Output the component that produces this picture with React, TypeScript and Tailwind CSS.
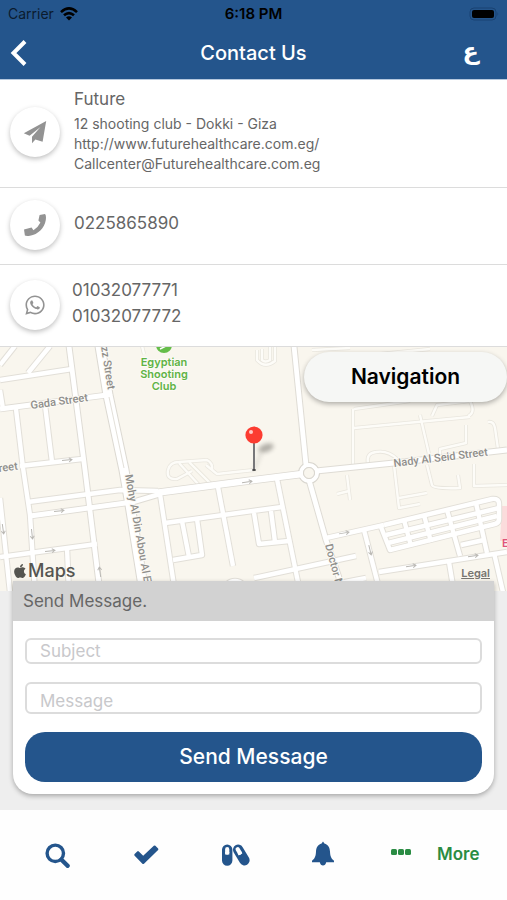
import type { ReactNode } from "react";
import { FaApple, FaWhatsapp } from "react-icons/fa";

const roads = {
  small: [
    "M0 365L15 346", "M28 373L50 346", "M0 380L72 369", "M0 390L3 409", "M16 409L23 468L30 515L35 592",
    "M45 405L52 462", "M20 466L82 459", "M28 502L120 490L158 491",
    "M0 557L97 544", "M0 498L10 592", "M67 548L69 592",
    "M160 494L175 592", "M165 523L282 507", "M182 521L189 557", "M197 519L202 555L173 560",
    "M218 487L233 566", "M224 592A11 11 0 1 1 246 592", "M277 479L300 592",
    "M254 513L259 544L289 541", "M271 511L275 542", "M326 538L384 525",
    "M364 530L380 592", "M379 572L507 552", "M449 562L454 592", "M494 553L503 592",
    "M254 578L356 556", "M340 583L366 578", "M461 545L484 540",
    "M384 525L492 499Q499 498 499 504V519Q499 523 495 524L390 550L381 527",
    "M386 535L499 508", "M388 543L497 516", "M404 520L411 546", "M424 515L431 542",
    "M447 510L460 556", "M476 503L487 553",
  ],
  medium: ["M0 409L107 395", "M69 346L85 470L100 592", "M294 346L306 465", "M309 480L326 540L344 592", "M30 516L133 502L160 494", "M316 471L394 463L507 450"],
  faint: [
    "M353 409V466", "M354 409L410 401", "M354 428L470 417", "M420 415L429 454", "M432 416L437 405L470 401Q476 413 468 416",
    "M440 463V449L466 443V425", "M488 422Q494 421 495 428L498 449", "M368 463Q366 453 376 452Q388 450 397 459",
    "M257 350V360Q265 369 275 361V346", "M262 349V360Q265 363 270 360V347", "M142 346L144 354",
    "M168 470Q170 462 179 462L207 460Q213 463 212 470", "M179 463L199 485", "M189 462L211 484",
    "M168 470Q166 480 177 479L192 471", "M206 465L217 474L254 470", "M347 475L350 500", "M337 494L349 491",
    "M394 465L399 508L420 504", "M399 498L427 493", "M427 465L432 485Q433 489 460 488L458 475", "M474 464V486L507 485",
    "M312 350L350 348", "M370 355L430 349",
  ],
};

const arrows: [number, number, number][] = [
  [67, 460, -5], [59, 511, -7], [50, 551, -7], [32, 534, 84], [100, 572, -98], [247, 482, -8],
  [344, 533, -10], [370, 550, 76], [411, 566, -8], [473, 556, -8], [3, 529, 82],
];

function StreetMap() {
  return (
    <svg
      viewBox="0 347 507 244"
      preserveAspectRatio="xMidYMid slice"
      className="block h-full w-full font-[Inter,sans-serif]"
      role="img"
      aria-label="Map"
    >
      <defs>
        <filter id="soft" x="-50%" y="-50%" width="200%" height="200%">
          <feGaussianBlur stdDeviation="2" />
        </filter>
      </defs>
      <rect y="346" width="507" height="246" fill="#f9f6ee" />
      <path d="M502 506H507V541H500Z" fill="#fbdcdc" />
      <g fill="none" strokeLinejoin="round">
        {roads.faint.map((d) => <path key={d} d={d} stroke="#e9e6de" strokeWidth="4" />)}
        {roads.faint.map((d) => <path key={d + "f"} d={d} stroke="#fdfcf8" strokeWidth="2.4" />)}
        {roads.small.map((d) => <path key={d} d={d} stroke="#e2dfd8" strokeWidth="6.4" />)}
        {roads.medium.map((d) => <path key={d} d={d} stroke="#dfdcd5" strokeWidth="6.8" />)}
        <path d="M100 346L108 395L124 470L130 505L144 592" stroke="#dcd9d2" strokeWidth="11" />
        <path d="M155 493L254 480L302 474" stroke="#dcd9d2" strokeWidth="8" />
        <circle cx="309" cy="473" r="8" stroke="#d9d6cf" strokeWidth="6" />
        {roads.small.map((d) => <path key={d + "w"} d={d} stroke="#fff" strokeWidth="4.4" />)}
        {roads.medium.map((d) => <path key={d + "w"} d={d} stroke="#fff" strokeWidth="4.8" />)}
        <path d="M100 346L108 395L124 470L130 505L144 592" stroke="#fff" strokeWidth="9" />
        <path d="M109 397L124 468" stroke="#e3e0d9" strokeWidth="1" />
        <path d="M155 493L254 480L302 474" stroke="#fff" strokeWidth="6.5" />
        <circle cx="309" cy="473" r="8" stroke="#fff" strokeWidth="4" />
        <circle cx="309" cy="473" r="5.5" fill="#f9f6ee" stroke="#d9d6cf" />
      </g>
      {arrows.map(([x, y, r]) => (
        <path key={`${x}-${y}`} d="M-5 0H5M2 -2L5 0L2 2" transform={`translate(${x} ${y}) rotate(${r})`} fill="none" stroke="#bab8b3" strokeWidth="1" />
      ))}
      <g className="font-[Roboto,sans-serif]" fill="#8f8e8b" stroke="#fcfaf5" strokeWidth="2" paintOrder="stroke" fontSize="11" fontWeight="500">
        <text transform="translate(31 409) rotate(-8)">Gada Street</text>
        <text transform="translate(101 347) rotate(81)">zz Street</text>
        <text transform="translate(125 475) rotate(80)">Mohy Al Din Abou Al E</text>
        <text transform="translate(394 467) rotate(-7)">Nady Al Seid Street</text>
        <text transform="translate(325 545) rotate(75)">Doctor M</text>
        <text transform="translate(-1 472) rotate(-7)">reet</text>
      </g>
      <g fill="#5fb345" stroke="#fcfaf5" strokeWidth="2" paintOrder="stroke" fontSize="11" fontWeight="600" textAnchor="middle">
        <text x="164" y="366">Egyptian</text>
        <text x="164" y="378">Shooting</text>
        <text x="164" y="390">Club</text>
      </g>
      <circle cx="164" cy="345" r="8" fill="#65bd49" />
      <path d="M160 349L168 345" stroke="#fff" strokeWidth="1.5" />
      <text x="502" y="547" fontSize="11" fontWeight="600" fill="#e0547b">E</text>
      <ellipse cx="266" cy="448" rx="8" ry="4" fill="#77756e" opacity=".55" transform="rotate(-20 266 448)" filter="url(#soft)" />
      <path d="M254 470L261 453" stroke="#8a8882" strokeWidth="2" opacity=".35" filter="url(#soft)" />
      <path d="M254 442V470" stroke="#77777a" strokeWidth="2" />
      <ellipse cx="254" cy="470" rx="2" ry="1" fill="#444" />
      <circle cx="254" cy="435" r="8.6" fill="#fc3c31" />
      <circle cx="251" cy="432" r="2" fill="#ffc9c5" />
    </svg>
  );
}

function SearchIcon() {
  return (
    <svg className="size-[25px]" viewBox="0 0 25 25" fill="none" stroke="currentColor">
      <circle cx="10.3" cy="10.3" r="8.2" strokeWidth="3.4" />
      <path d="M16.5 16.8L22.6 22.8" strokeWidth="4.4" strokeLinecap="round" />
    </svg>
  );
}

function CheckIcon() {
  return (
    <svg className="h-5 w-[25px]" viewBox="0 0 25 20" fill="currentColor">
      <path d="M.4 10.4Q0 9.6.6 9L3.2 6.4Q4 5.8 4.8 6.4L9.2 10.8L19.8.8Q20.6.2 21.4.8L24.1 3.5Q24.7 4.3 24.1 5.1L10 18.8Q9.2 19.4 8.4 18.8Z" />
    </svg>
  );
}

function CapsulesIcon() {
  return (
    <svg className="h-[22px] w-7" viewBox="0 0 28 22" fill="none" stroke="currentColor" strokeLinecap="round">
      <path d="M5.2 5.6V16.6M16.2 5.8L22.4 16.2" strokeWidth="10.4" />
      <path d="M5.2 5.2V8.6M15.6 5.2L17.8 8.8" stroke="#fefefe" strokeWidth="4.2" />
      <path d="M3.1 8H7.3V10.6H3.1ZM15.6 9.6L19.2 7.4L20.4 9.3L16.7 11.5Z" fill="#fefefe" stroke="none" />
    </svg>
  );
}

function BellIcon() {
  return (
    <svg className="h-[25px] w-[22px]" viewBox="0 0 22 25" fill="currentColor">
      <path d="M11 .5L12.4 2.4C16.2 3.5 17.8 6.5 18 10.5C18.2 15 19 17.2 22 19.8V21.2H14.2Q13.4 24.5 11 24.5Q8.6 24.5 7.8 21.2H0V19.8C3 17.2 3.8 15 4 10.5C4.2 6.5 5.8 3.5 9.6 2.4Z" />
    </svg>
  );
}

function ContactRow({ icon, children, className }: { icon: ReactNode; children: ReactNode; className: string }) {
  return (
    <section className={`flex items-center border-b border-[#dcdcdc] px-2.5 ${className}`}>
      <div className="flex size-[50px] shrink-0 items-center justify-center rounded-full bg-white text-[#939393] shadow-[0_2px_5px_rgba(0,0,0,0.25)]">
        {icon}
      </div>
      {children}
    </section>
  );
}

export default function App() {
  return (
    <div className="flex min-h-screen flex-col bg-[#eeeeee] font-[Inter,'Liberation_Sans',sans-serif] text-[#666666]">
      <header className="border-b border-[#b5c8de] bg-[#24558c]">
        <div className="grid h-7 grid-cols-3 items-center px-2 text-black">
          <div className="flex items-center gap-1.5 text-sm text-[#0b1b2e]">
            Carrier
            <svg className="h-[14px] w-[18px]" viewBox="0 0 18 14" fill="none" stroke="#000" strokeWidth="2.6">
              <path d="M1 5.1Q9-2.3 17 5.1M4 8.3Q9 3.8 14 8.3" />
              <path d="M9 13.5L6 10.5Q9 8 12 10.5Z" fill="#000" stroke="none" />
            </svg>
          </div>
          <div className="text-center text-[15px] font-semibold">6:18 PM</div>
          <svg className="h-[14px] w-[30px] justify-self-end" viewBox="0 0 30 14">
            <rect x="1" y="1" width="26" height="12" rx="4" fill="none" stroke="#194272" />
            <rect x="3" y="3" width="22" height="8" rx="2" fill="#000" />
            <path d="M28.5 5V9Q30 7 28.5 5Z" fill="#194272" />
          </svg>
        </div>
        <div className="grid h-[51px] grid-cols-3 items-center px-2.5 pb-0.5 text-white">
          <button type="button" aria-label="Back" className="w-8">
            <svg className="h-[26px] w-[17px]" viewBox="0 0 17 26" fill="none" stroke="currentColor" strokeWidth="4">
              <path d="M15 1.5L3.5 13L15 24.5" />
            </svg>
          </button>
          <h1 className="text-center text-xl font-medium whitespace-nowrap">Contact Us</h1>
          <button type="button" lang="ar" className="justify-self-end px-[18px] pb-1 font-['DejaVu_Sans',sans-serif] text-2xl leading-8 font-bold">ع</button>
        </div>
      </header>

      <main className="flex grow flex-col">
        <div className="bg-white">
          <ContactRow
            className="h-[108px] pb-1"
            icon={
              <svg className="size-6" viewBox="0 0 24 24" fill="currentColor">
                <path d="M23.2 1L.8 13.3L6.6 15.8L17.5 7L9 16.8V23.2L12.4 19.6L19.6 21.8Z" />
              </svg>
            }
          >
            <div className="min-w-0 pb-1.5 pl-3.5">
              <h2 className="text-[17px] leading-[30px]">Future</h2>
              <address className="text-sm leading-5 not-italic">
                12 shooting club - Dokki - Giza
                <br />
                <a href="http://www.futurehealthcare.com.eg/">http://www.futurehealthcare.com.eg/</a>
                <br />
                <a href="mailto:Callcenter@Futurehealthcare.com.eg">Callcenter@Futurehealthcare.com.eg</a>
              </address>
            </div>
          </ContactRow>
          <ContactRow
            className="h-[77px] pb-0.5"
            icon={
              <svg className="size-[22px]" viewBox="0 0 22 22" fill="currentColor">
                <path d="M15.6 1L21 0Q22.4 1 21.8 6C20.5 14 14 20.5 6 21.8Q2 22.3 .9 21.5L0 15.6L7.6 13.6L9.4 16.2Q14.2 13.2 16.4 8.4L14.4 6.6Z" />
              </svg>
            }
          >
            <a href="tel:0225865890" className="pb-0.5 pl-3.5 text-[17px]">0225865890</a>
          </ContactRow>
          <ContactRow className="h-[82px] pb-0.5" icon={<FaWhatsapp className="size-[22px]" />}>
            <div className="flex flex-col pb-1 pl-3 text-[17px] leading-[26px]">
              <a href="tel:01032077771">01032077771</a>
              <a href="tel:01032077772">01032077772</a>
            </div>
          </ContactRow>
        </div>

        <section className="relative h-[244px]">
          <StreetMap />
          <button type="button" className="absolute top-[5px] right-0 h-[50px] w-[203px] rounded-[25px] bg-[#f6f7f5] text-[21px] font-semibold text-black shadow-[0_2px_5px_rgba(0,0,0,0.3)]">
            Navigation
          </button>
          <div className="absolute bottom-2 left-3 flex items-center text-lg leading-6 font-medium text-[#555550]">
            <FaApple className="size-4" />
            Maps
          </div>
          <a href="#legal" className="absolute right-[17px] bottom-2.5 text-[11px] leading-4 font-semibold text-[#777570] underline">Legal</a>
        </section>

        <form className="relative mx-[13px] -mt-[10px] overflow-hidden rounded-b-[20px] bg-white shadow-[0_2px_5px_rgba(0,0,0,0.3)]">
          <h2 className="bg-[#d2d2d2] px-2.5 text-[17px] leading-10">Send Message.</h2>
          <div className="flex flex-col px-3 pt-[17px] pb-3">
            <input aria-label="Subject" placeholder="Subject" className="h-[26px] rounded-md border-2 border-[#dcdcdc] px-[13px] text-[17px] outline-none placeholder:text-[#c8c8cb]" />
            <input aria-label="Message" placeholder="Message" className="mt-[18px] h-8 rounded-md border-2 border-[#dcdcdc] px-[13px] pt-1.5 text-[17px] outline-none placeholder:text-[#c8c8cb]" />
            <button type="submit" className="mt-[18px] h-[50px] rounded-[20px] bg-[#24558c] text-[21px] font-medium text-white">Send Message</button>
          </div>
        </form>
      </main>

      <nav className="mt-3.5 grid h-[90px] grid-cols-[repeat(4,minmax(0,89fr))_minmax(0,138fr)] items-center bg-[#fefefe] pl-[13px] text-[#24558c]">
        <button type="button" aria-label="Search" className="flex justify-center"><SearchIcon /></button>
        <button type="button" aria-label="Approvals" className="flex justify-center"><CheckIcon /></button>
        <button type="button" aria-label="Medication" className="flex justify-center"><CapsulesIcon /></button>
        <button type="button" aria-label="Notifications" className="flex justify-center pr-1 pb-1"><BellIcon /></button>
        <button type="button" className="flex items-center gap-[26px] pl-[22px] text-[17px] font-semibold text-[#2a8c43]">
          <svg className="h-3 w-5 shrink-0" viewBox="0 0 20 12" fill="currentColor">
            <rect width="6" height="6" rx="1.5" />
            <rect x="7" width="6" height="6" rx="1.5" />
            <rect x="14" width="6" height="6" rx="1.5" />
          </svg>
          More
        </button>
      </nav>
    </div>
  );
}
